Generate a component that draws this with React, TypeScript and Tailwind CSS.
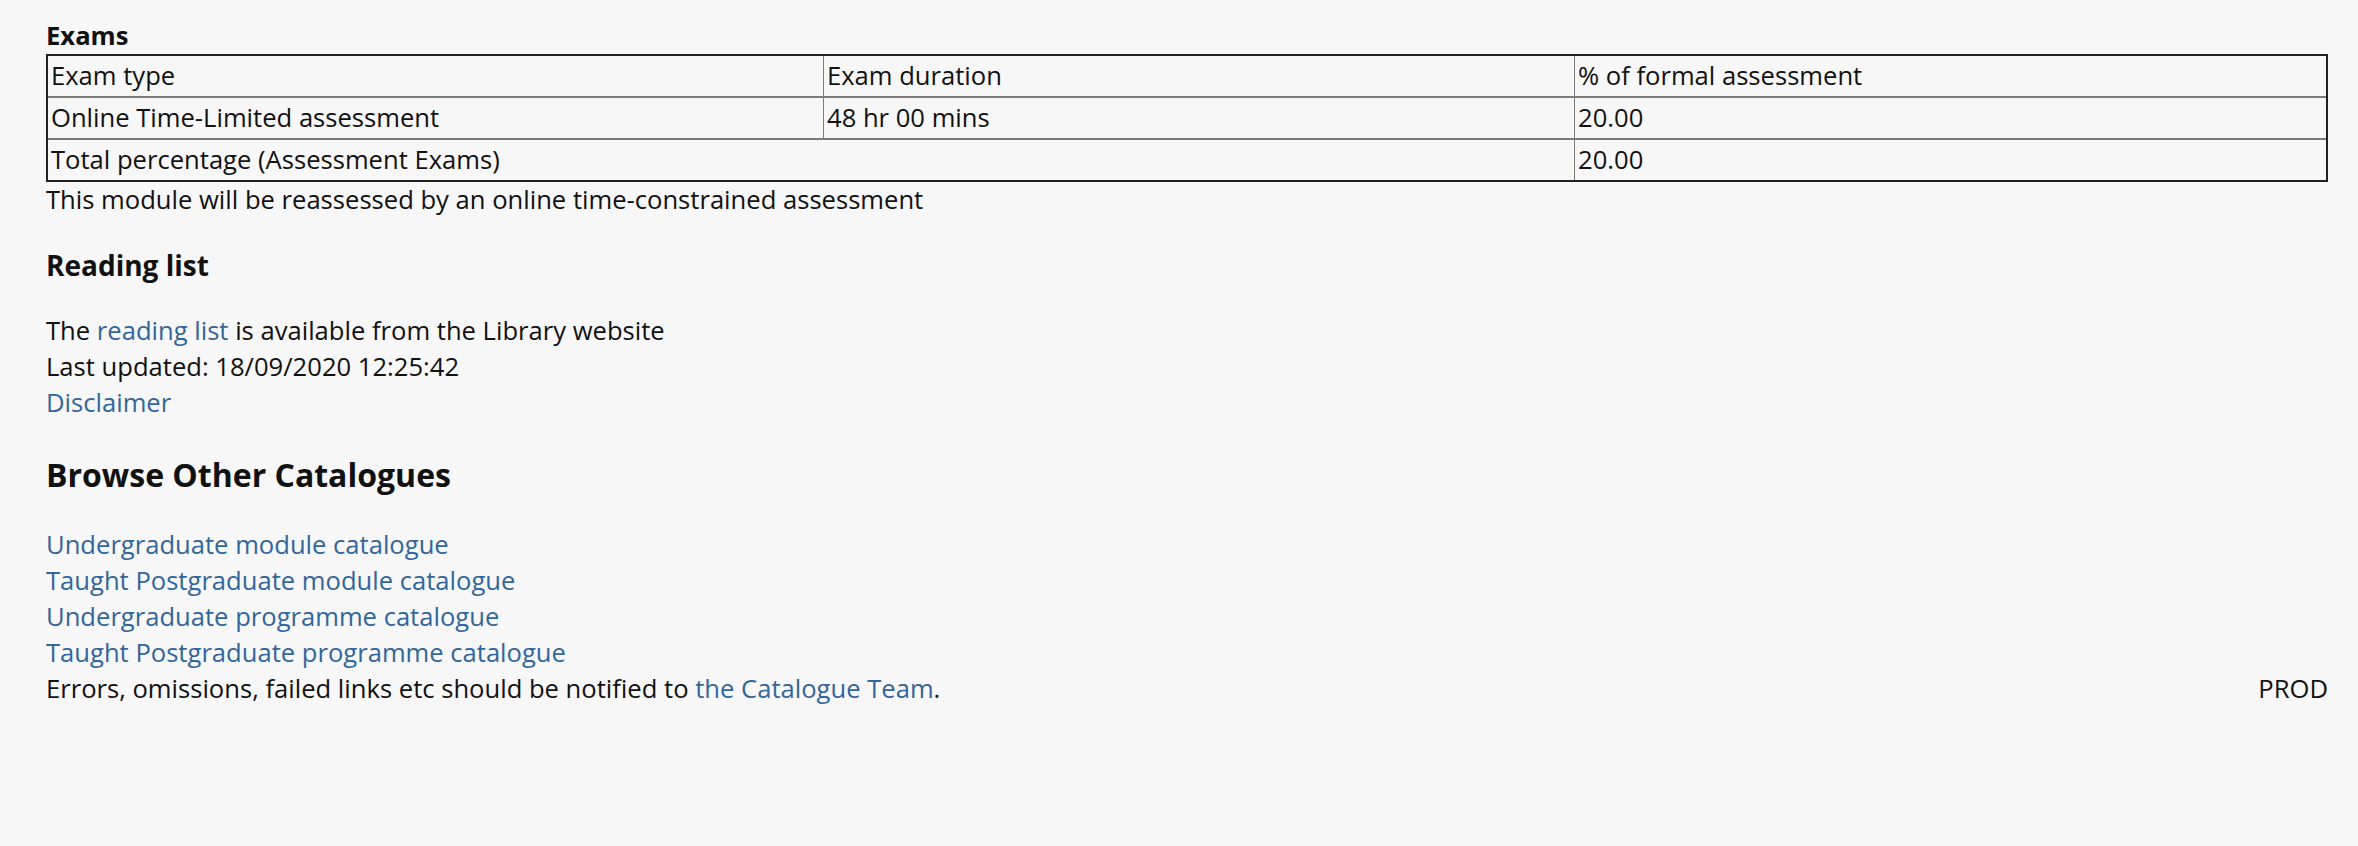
import React from "react";

const link = "text-[#33669a] no-underline";

export default function App() {
  return (
    <div
      className="min-h-screen w-full bg-[#f7f7f7] text-[#111] pl-[46px] pr-[30px] pt-[20px]"
      style={{ fontFamily: '"Open Sans", "Noto Sans", sans-serif' }}
    >
      <h3 className="m-0 text-[25.6px] font-bold leading-[32px]">Exams</h3>
      <table className="mt-[2px] w-full table-fixed border-separate border-spacing-0 border-2 border-[#222] text-[25.6px] leading-[40px]">
        <colgroup>
          <col className="w-[775px]" />
          <col className="w-[751px]" />
          <col />
        </colgroup>
        <tbody>
          <tr>
            <td className="p-0 pl-[3px] border-b-2 border-[#7b7b7b]">Exam type</td>
            <td className="p-0 pl-[3px] border-b-2 border-l border-[#7b7b7b]">Exam duration</td>
            <td className="p-0 pl-[3px] border-b-2 border-l border-[#7b7b7b]">% of formal assessment</td>
          </tr>
          <tr>
            <td className="p-0 pl-[3px] border-b-2 border-[#7b7b7b]">Online Time-Limited assessment</td>
            <td className="p-0 pl-[3px] border-b-2 border-l border-[#7b7b7b]">48 hr 00 mins</td>
            <td className="p-0 pl-[3px] border-b-2 border-l border-[#7b7b7b]">20.00</td>
          </tr>
          <tr>
            <td colSpan={2} className="p-0 pl-[3px]">Total percentage (Assessment Exams)</td>
            <td className="p-0 pl-[3px] border-l border-[#7b7b7b]">20.00</td>
          </tr>
        </tbody>
      </table>
      <p className="m-0 text-[25.6px] leading-[36px]">
        This module will be reassessed by an online time-constrained assessment
      </p>

      <h3 className="mt-[27px] mb-0 text-[28px] font-bold leading-[40px]">Reading list</h3>
      <div className="mt-[28px] text-[25.6px] leading-[36px]">
        <div>
          The <a className={link} href="#">reading list</a> is available from the Library website
        </div>
        <div>Last updated: 18/09/2020 12:25:42</div>
        <div>
          <a className={link} href="#">Disclaimer</a>
        </div>
      </div>

      <h2 className="mt-[32px] mb-0 text-[32px] font-bold leading-[44px]">Browse Other Catalogues</h2>
      <div className="mt-[30px] text-[25.6px] leading-[36px]">
        <div>
          <a className={link} href="#">Undergraduate module catalogue</a>
        </div>
        <div>
          <a className={link} href="#">Taught Postgraduate module catalogue</a>
        </div>
        <div>
          <a className={link} href="#">Undergraduate programme catalogue</a>
        </div>
        <div>
          <a className={link} href="#">Taught Postgraduate programme catalogue</a>
        </div>
        <div className="flex justify-between">
          <span>
            Errors, omissions, failed links etc should be notified to{" "}
            <a className={link} href="#">the Catalogue Team</a>.
          </span>
          <span>PROD</span>
        </div>
      </div>
    </div>
  );
}
